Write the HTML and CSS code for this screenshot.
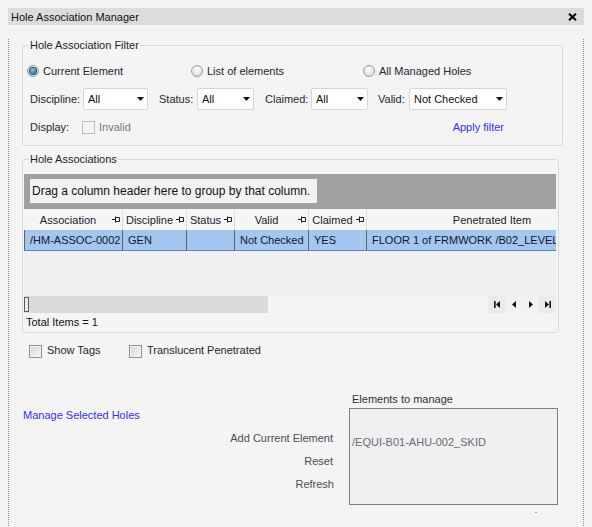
FILE: index.html
```html
<!DOCTYPE html>
<html>
<head>
<meta charset="utf-8">
<title>Hole Association Manager</title>
<link rel="stylesheet" href="styles.css">
</head>
<body>
<div class="window">
  <div class="titlebar">
    <span class="title">Hole Association Manager</span>
    <svg class="close" width="9" height="8" viewBox="0 0 9 8"><path d="M1 0.8L8 7.2M8 0.8L1 7.2" stroke="#000" stroke-width="2" fill="none"/></svg>
  </div>
  <div class="content">
    <fieldset class="group filter">
      <legend>Hole Association Filter</legend>
      <div class="row radios">
        <label class="opt w1"><span class="radio on"></span>Current Element</label>
        <label class="opt w2"><span class="radio"></span>List of elements</label>
        <label class="opt"><span class="radio"></span>All Managed Holes</label>
      </div>
      <div class="row selects">
        <span class="lbl l-disc">Discipline:</span>
        <div class="combo c-disc"><span>All</span><svg width="7" height="4" viewBox="0 0 7 4"><path d="M0 0H7L3.5 4Z" fill="#111"/></svg></div>
        <span class="lbl l-stat">Status:</span>
        <div class="combo c-stat"><span>All</span><svg width="7" height="4" viewBox="0 0 7 4"><path d="M0 0H7L3.5 4Z" fill="#111"/></svg></div>
        <span class="lbl l-claim">Claimed:</span>
        <div class="combo c-claim"><span>All</span><svg width="7" height="4" viewBox="0 0 7 4"><path d="M0 0H7L3.5 4Z" fill="#111"/></svg></div>
        <span class="lbl l-valid">Valid:</span>
        <div class="combo c-valid"><span>Not Checked</span><svg width="7" height="4" viewBox="0 0 7 4"><path d="M0 0H7L3.5 4Z" fill="#111"/></svg></div>
      </div>
      <div class="row display">
        <span class="lbl l-disp">Display:</span>
        <span class="check disabled"></span>
        <span class="muted">Invalid</span>
        <a class="link apply">Apply filter</a>
      </div>
    </fieldset>

    <fieldset class="group assoc">
      <legend>Hole Associations</legend>
      <div class="grid">
        <div class="groupby"><span class="groupby-text">Drag a column header here to group by that column.</span></div>
        <div class="hdr">
          <div class="hc k1"><span class="ht">Association</span><svg class="pin" width="8" height="7" viewBox="0 0 8 7"><path d="M0 3.5H3M3.5 0.5V6.5M3.5 1.5H7.5V5.5H3.5" stroke="#222" stroke-width="1" fill="none"/></svg></div>
          <div class="hc k2"><span class="ht">Discipline</span><svg class="pin" width="8" height="7" viewBox="0 0 8 7"><path d="M0 3.5H3M3.5 0.5V6.5M3.5 1.5H7.5V5.5H3.5" stroke="#222" stroke-width="1" fill="none"/></svg></div>
          <div class="hc k3"><span class="ht">Status</span><svg class="pin" width="8" height="7" viewBox="0 0 8 7"><path d="M0 3.5H3M3.5 0.5V6.5M3.5 1.5H7.5V5.5H3.5" stroke="#222" stroke-width="1" fill="none"/></svg></div>
          <div class="hc k4"><span class="ht">Valid</span><svg class="pin" width="8" height="7" viewBox="0 0 8 7"><path d="M0 3.5H3M3.5 0.5V6.5M3.5 1.5H7.5V5.5H3.5" stroke="#222" stroke-width="1" fill="none"/></svg></div>
          <div class="hc k5"><span class="ht">Claimed</span><svg class="pin" width="8" height="7" viewBox="0 0 8 7"><path d="M0 3.5H3M3.5 0.5V6.5M3.5 1.5H7.5V5.5H3.5" stroke="#222" stroke-width="1" fill="none"/></svg></div>
          <div class="hc k6"><span class="ht">Penetrated Item</span></div>
        </div>
        <div class="datarow">
          <div class="dc k1">/HM-ASSOC-0002</div>
          <div class="dc k2">GEN</div>
          <div class="dc k3"></div>
          <div class="dc k4">Not Checked</div>
          <div class="dc k5">YES</div>
          <div class="dc k6">FLOOR 1 of FRMWORK /B02_LEVEL</div>
        </div>
        <div class="empty"></div>
        <div class="scrollrow">
          <div class="hscroll"><span class="thumb"></span></div>
          <div class="nav">
            <span class="navbtn dark"><svg width="6" height="7" viewBox="0 0 6 7"><rect x="0" y="0" width="1.6" height="7" fill="#111"/><path d="M6 0L2 3.5L6 7Z" fill="#111"/></svg></span>
            <span class="navbtn"><svg width="4" height="7" viewBox="0 0 4 7"><path d="M4 0L0 3.5L4 7Z" fill="#111"/></svg></span>
            <span class="navbtn"><svg width="4" height="7" viewBox="0 0 4 7"><path d="M0 0L4 3.5L0 7Z" fill="#111"/></svg></span>
            <span class="navbtn dark"><svg width="6" height="7" viewBox="0 0 6 7"><path d="M0 0L4 3.5L0 7Z" fill="#111"/><rect x="4.4" y="0" width="1.6" height="7" fill="#111"/></svg></span>
          </div>
        </div>
      </div>
      <div class="total">Total Items = 1</div>
    </fieldset>

    <div class="opts">
      <label class="cb w-show"><span class="check"></span><span class="cbl">Show Tags</span></label>
      <label class="cb"><span class="check"></span><span class="cbl">Translucent Penetrated</span></label>
    </div>

    <div class="bottom">
      <div class="leftcol">
        <a class="link manage">Manage Selected Holes</a>
        <div class="actions">
          <span class="act">Add Current Element</span>
          <span class="act">Reset</span>
          <span class="act refresh">Refresh</span>
        </div>
      </div>
      <div class="rightcol">
        <div class="elabel">Elements to manage</div>
        <div class="ebox">/EQUI-B01-AHU-002_SKID</div>
        <div class="tick"></div>
      </div>
    </div>
  </div>
</div>
</body>
</html>
```

FILE: styles.css
```css
html, body {
  margin: 0;
  background: #f3f3f3;
}
body {
  padding: 8px;
  font-family: "Liberation Sans", Arial, sans-serif;
  font-size: 11px;
  color: #262630;
}
.window {
  width: 576px;
}
.titlebar {
  height: 17px;
  background: #dcdcdc;
  display: flex;
  align-items: center;
  justify-content: space-between;
  padding: 0 7px 0 3px;
}
.title {
  color: #111;
  font-size: 11px;
}
.content {
  height: 492px;
  border: 1px dotted #8e8e8e;
  border-top: none;
  background: #f4f4f4;
}

/* group boxes */
.group {
  box-sizing: border-box;
  border: 1px solid #d3dbe1;
  border-radius: 3px;
  margin: 0 0 0 13px;
  min-width: 0;
}
.group legend {
  font-size: 11px;
  line-height: 13px;
  padding: 0 1px;
  color: #1e1e28;
}
.filter {
  width: 541px;
  margin-top: 14px;
  padding: 0 0 10px 4px;
}
.filter legend { margin-left: 2px; }
.assoc {
  width: 537px;
  margin-top: 7px;
  padding: 8px 2px 3px 1px;
}
.assoc legend { margin-left: 5px; }

.row {
  display: flex;
  align-items: center;
}
.radios {
  height: 16px;
  margin-top: 11px;
}
.opt {
  display: flex;
  align-items: center;
  gap: 4px;
}
.opt.w1 { width: 164px; }
.opt.w2 { width: 172px; }
.radio {
  box-sizing: border-box;
  width: 12px;
  height: 12px;
  border-radius: 50%;
  border: 1px solid #9c9c9c;
  background: radial-gradient(circle at 50% 35%, #fdfdfd, #d4d4d4);
  display: flex;
  align-items: center;
  justify-content: center;
}
.radio.on::after {
  content: "";
  width: 6px;
  height: 6px;
  border-radius: 50%;
  background: radial-gradient(circle at 40% 35%, #7cc8f6, #0c5a9c);
  box-shadow: 0 0 0 1px #2b3b4b;
}

.selects {
  height: 22px;
  margin-top: 9px;
}
.lbl { display: inline-block; }
.l-disc { margin-left: 3px; width: 53px; }
.l-stat { margin-left: 11px; width: 38px; }
.l-claim { margin-left: 11px; width: 46px; }
.l-valid { margin-left: 10px; width: 31px; }
.combo {
  box-sizing: border-box;
  height: 22px;
  background: #fff;
  border: 1px solid #d6d6d6;
  border-radius: 2px;
  display: flex;
  align-items: center;
  justify-content: space-between;
  padding: 0 3px 0 4px;
  color: #111;
}
.c-disc { width: 65px; }
.c-stat { width: 57px; }
.c-claim { width: 57px; }
.c-valid { width: 98px; }

.display {
  height: 16px;
  margin-top: 9px;
}
.l-disp { margin-left: 3px; width: 52px; }
.check {
  box-sizing: border-box;
  display: inline-block;
  width: 13px;
  height: 13px;
  border: 1px solid #8e8f8f;
  background: linear-gradient(135deg, #d6d6d6, #f7f7f7);
  box-shadow: inset 0 0 0 1px #f2f2f2;
}
.check.disabled {
  border-color: #bdbdbd;
  background: #f4f4f4;
  box-shadow: none;
}
.muted {
  margin-left: 4px;
  color: #7a7480;
}
.link {
  color: #3232f5;
  cursor: pointer;
}
.apply {
  margin-left: auto;
  margin-right: 58px;
}

/* grid */
.grid {
  width: 532px;
  overflow: hidden;
}
.groupby {
  box-sizing: border-box;
  height: 35px;
  background: #a0a0a0;
  padding: 5px 0 0 6px;
}
.groupby-text {
  display: block;
  box-sizing: border-box;
  width: 287px;
  height: 24px;
  background: #f2f2f2;
  font-size: 12px;
  line-height: 24px;
  padding-left: 2px;
  color: #111;
  white-space: nowrap;
}
.hdr, .datarow {
  display: flex;
  width: 600px;
}
.hdr {
  height: 21px;
  background: #f5f5f5;
}
.hc {
  box-sizing: border-box;
  display: flex;
  align-items: center;
  border-right: 1px solid #dcdcdc;
  color: #1a1a2a;
}
.ht {
  flex: 1;
  text-align: center;
  white-space: nowrap;
}
.pin { margin-right: 2px; flex: none; }
.k1 { width: 99px; }
.k2 { width: 64px; }
.k3 { width: 48px; }
.k4 { width: 74px; }
.k5 { width: 58px; }
.k6 { width: 251px; }
.datarow {
  height: 21px;
  box-sizing: border-box;
  background: #a4c7f1;
  border-bottom: 1px solid #5b84c4;
}
.dc {
  box-sizing: border-box;
  border-right: 1px solid #606066;
  padding-left: 5px;
  line-height: 20px;
  white-space: nowrap;
  overflow: hidden;
  color: #14142e;
}
.dc.k1 { border-left: 1px solid #606066; }
.empty {
  height: 45px;
  background: #efefef;
}
.scrollrow {
  height: 17px;
  display: flex;
  justify-content: space-between;
  background: #f4f4f4;
}
.hscroll {
  width: 244px;
  background: #dadada;
}
.thumb {
  display: block;
  box-sizing: border-box;
  width: 5px;
  height: 15px;
  margin-top: 1px;
  border: 1px solid #5a5a5a;
  background: #eeeeee;
}
.nav {
  display: flex;
}
.navbtn {
  width: 17px;
  height: 17px;
  display: flex;
  align-items: center;
  justify-content: center;
  background: #f1f1f1;
}
.navbtn.dark { background: #ebebeb; }
.total {
  margin-top: 3px;
  line-height: 13px;
  padding-left: 2px;
  color: #111;
}

/* options */
.opts {
  display: flex;
  margin: 12px 0 0 20px;
  height: 13px;
}
.cb {
  display: flex;
  align-items: flex-start;
}
.cb.w-show { width: 100px; }
.cbl {
  margin-left: 5px;
  margin-top: -1px;
  line-height: 13px;
}

/* bottom */
.bottom {
  display: flex;
  margin-top: 35px;
  margin-left: 14px;
}
.leftcol {
  width: 311px;
  display: flex;
  flex-direction: column;
}
.manage {
  margin-top: 16px;
  line-height: 13px;
}
.actions {
  display: flex;
  flex-direction: column;
  align-items: flex-end;
  gap: 10px;
  margin-top: 10px;
  padding-right: 1px;
}
.act {
  line-height: 13px;
  color: #4d4d55;
}
.act.refresh { margin-right: -1px; }
.rightcol {
  margin-left: 15px;
  width: 209px;
}
.elabel {
  line-height: 13px;
  padding-left: 3px;
  color: #30303a;
}
.ebox {
  box-sizing: border-box;
  margin-top: 2px;
  width: 209px;
  height: 97px;
  border: 1px solid #808080;
  background: #f0f0f0;
  padding: 27px 0 0 2px;
  line-height: 13px;
  color: #6a6a78;
}
.tick {
  margin: 7px 0 0 186px;
  width: 2px;
  height: 1px;
  background: #9a9a9a;
}
```
